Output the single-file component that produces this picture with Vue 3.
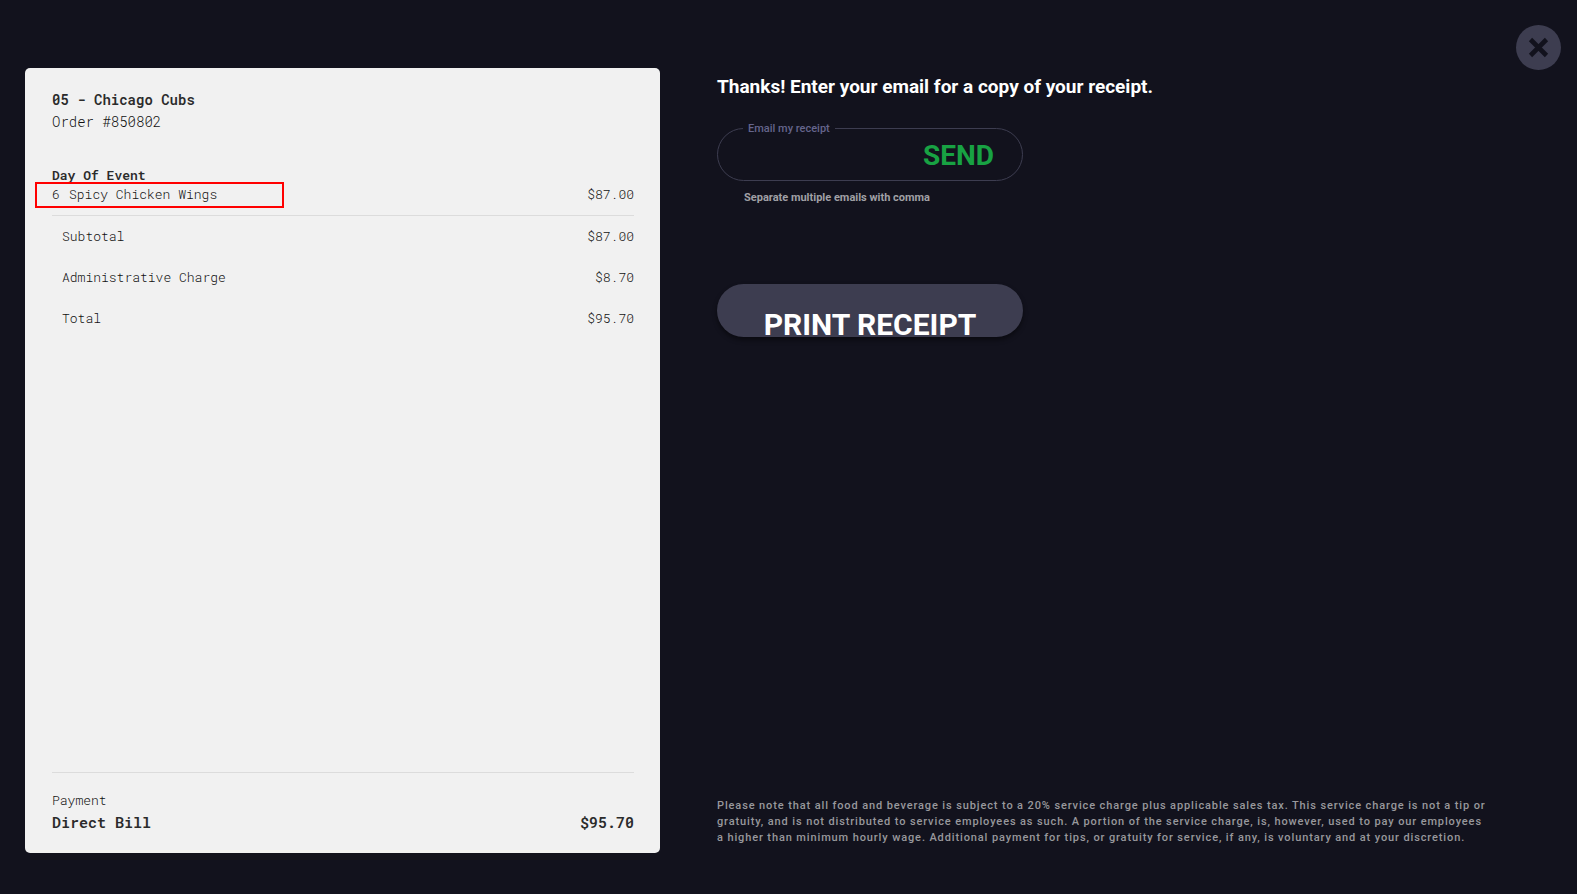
<script setup>
import { ref } from 'vue'

const email = ref('')
const items = [{ quantity: 6, name: 'Spicy Chicken Wings', price: '$87.00' }]
const totals = [
  { label: 'Subtotal', amount: '$87.00' },
  { label: 'Administrative Charge', amount: '$8.70' },
  { label: 'Total', amount: '$95.70' },
]
</script>

<template>
  <main class="screen">
    <button class="close" type="button" aria-label="Close">
      <svg viewBox="0 0 21 21" width="21" height="21" aria-hidden="true">
        <path d="M2.5 2.5 18.5 18.5M18.5 2.5 2.5 18.5" stroke="currentColor" stroke-width="4.6" />
      </svg>
    </button>

    <section class="receipt">
      <header class="order">
        <h2 class="account">05 - Chicago Cubs</h2>
        <p class="number">Order #850802</p>
      </header>

      <h3 class="group">Day Of Event</h3>
      <table class="items">
        <tbody>
          <tr v-for="item in items" :key="item.name">
            <td class="quantity">{{ item.quantity }}</td>
            <td class="name">{{ item.name }}<span class="highlight"></span></td>
            <td class="price">{{ item.price }}</td>
          </tr>
        </tbody>
      </table>

      <table class="totals">
        <tbody>
          <tr v-for="row in totals" :key="row.label">
            <th scope="row">{{ row.label }}</th>
            <td class="price">{{ row.amount }}</td>
          </tr>
        </tbody>
      </table>

      <footer class="payment">
        <p class="caption">Payment</p>
        <p class="paid"><span>Direct Bill</span><span>$95.70</span></p>
      </footer>
    </section>

    <section class="actions">
      <h1 class="thanks">Thanks! Enter your email for a copy of your receipt.</h1>
      <form class="form" @submit.prevent>
        <fieldset class="field">
          <legend><label for="email">Email my receipt</label></legend>
          <div class="entry">
            <input id="email" v-model="email" type="text" />
            <button class="send" type="submit">SEND</button>
          </div>
        </fieldset>
        <p class="hint">Separate multiple emails with comma</p>
      </form>
      <button class="print" type="button"><span>PRINT RECEIPT</span></button>
      <p class="note">
        Please note that all food and beverage is subject to a 20% service charge plus applicable sales tax. This service charge is not a tip or gratuity, and is not distributed to service employees as such. A portion of the service charge, is, however, used to pay our employees a higher than minimum hourly wage. Additional payment for tips, or gratuity for service, if any, is voluntary and at your discretion.
      </p>
    </section>
  </main>
</template>

<style>
body {
  margin: 0;
  background: #12121d;
}
</style>

<style scoped>
* {
  box-sizing: border-box;
}

h1, h2, h3, p {
  margin: 0;
}

button, input {
  font-family: inherit;
  border: 0;
  padding: 0;
}

button {
  cursor: pointer;
}

.screen {
  position: relative;
  display: grid;
  grid-template-columns: 635fr 771fr;
  column-gap: 57px;
  min-height: 100vh;
  padding: 68px 89px 41px 25px;
  background: #12121d;
  color: #fff;
  font-family: Roboto, "Liberation Sans", sans-serif;
}

.close {
  position: absolute;
  top: 25px;
  right: 16px;
  display: grid;
  place-items: center;
  width: 45px;
  height: 45px;
  border-radius: 50%;
  background: #3d3d50;
  color: #12121d;
}

.receipt {
  display: flex;
  flex-direction: column;
  padding: 21px 26px 19px 27px;
  border-radius: 5px;
  background: #f1f1f1;
  color: #111;
  font-family: "Roboto Mono", "Liberation Mono", monospace;
  font-size: 13px;
  font-weight: 300;
  line-height: 20px;
}

.order {
  font-size: 14px;
  line-height: 22px;
}

.account, .group, .paid {
  color: #2b2b2b;
  font-weight: 600;
}

.account {
  font-size: 14px;
}

.group {
  margin-top: 32px;
  font-size: 13px;
}

table {
  width: 100%;
  border-collapse: collapse;
}

td, th {
  padding: 0;
  text-align: left;
  font-weight: 300;
}

.items {
  border-bottom: 1px solid #dcdcdc;
}

.items td {
  height: 30px;
  padding-bottom: 12px;
  line-height: 18px;
}

.items .quantity {
  width: 17px;
}

.name {
  position: relative;
}

.highlight {
  position: absolute;
  top: -3px;
  left: -34px;
  width: 249px;
  height: 26px;
  border: 2px solid #f00;
}

.price, .items .price {
  text-align: right;
}

.totals th, .totals td {
  height: 41px;
  padding-bottom: 1px;
}

.totals th {
  padding-left: 10px;
}

.payment {
  margin-top: auto;
  padding-top: 17px;
  border-top: 1px solid #dcdcdc;
}

.paid {
  display: flex;
  justify-content: space-between;
  font-size: 15px;
  line-height: 24px;
}

.actions {
  display: flex;
  flex-direction: column;
  align-items: flex-start;
}

.thanks {
  margin-top: 7px;
  font-size: 19px;
  font-weight: 700;
  line-height: 24px;
}

.form {
  margin-top: 23px;
}

.field {
  width: 306px;
  min-width: 0;
  margin: 0;
  padding: 0 28px 0 25px;
  border: 1px solid #3d3d50;
  border-radius: 27px;
}

.field legend {
  padding: 0 5px;
  color: #65658c;
  font-size: 11px;
  font-weight: 500;
  line-height: 13px;
}

.field label {
  display: block;
}

.entry {
  display: flex;
  align-items: center;
  height: 45px;
  padding-bottom: 4px;
}

.entry input {
  flex: 1;
  min-width: 0;
  height: 32px;
  background: transparent;
  color: #fff;
  font-size: 18px;
  outline: 0;
}

.send {
  background: transparent;
  color: #18a243;
  font-size: 28px;
  font-weight: 700;
  line-height: 32px;
}

.hint {
  margin-top: 10px;
  padding-left: 27px;
  color: #a0a0a5;
  font-size: 11px;
  font-weight: 700;
  line-height: 13px;
}

.print {
  display: flex;
  justify-content: center;
  align-items: flex-end;
  width: 306px;
  height: 53px;
  margin-top: 80px;
  overflow: hidden;
  border-radius: 27px;
  background: #3d3d50;
  box-shadow: 0 3px 5px rgba(0, 0, 0, 0.45);
  color: #fff;
  font-size: 30px;
  font-weight: 700;
}

.print span {
  height: 30px;
  line-height: 36px;
}

.note {
  margin-top: auto;
  padding-bottom: 7px;
  color: #98989c;
  font-size: 11px;
  font-weight: 500;
  letter-spacing: 0.08em;
  line-height: 16px;
}
</style>
